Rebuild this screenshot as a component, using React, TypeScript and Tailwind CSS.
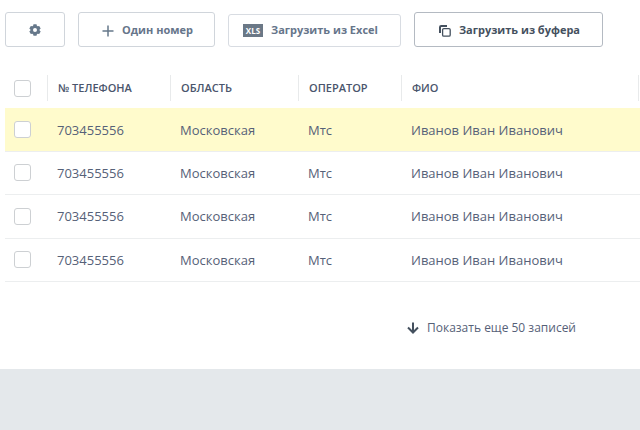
import type { ReactNode } from "react";

const columns = ["№ ТЕЛЕФОНА", "ОБЛАСТЬ", "ОПЕРАТОР", "ФИО"];

const records = [1, 2, 3, 4].map((id) => ({
  id,
  phone: "703455556",
  region: "Московская",
  operator: "Мтс",
  name: "Иванов Иван Иванович",
  highlighted: id === 1,
}));

function GearIcon() {
  return (
    <svg width="12" height="12" viewBox="0 0 12 12" fill="#66788a" fillRule="evenodd" aria-hidden="true">
      <path d="M4.500 0.300h3l.4 1.500.8.500 1.500-.4 1.500 2.600-1.100 1.100v.8l1.100 1.100-1.500 2.600-1.500-.4-.8.500-.4 1.500h-3l-.4-1.500-.8-.500-1.500.4L.3 7.500l1.100-1.100v-.8L.3 4.500 1.800 1.900l1.500.4.8-.500zM6 4a2 2 0 1 0 0 4 2 2 0 0 0 0-4z" />
    </svg>
  );
}

function PlusIcon() {
  return (
    <svg width="12" height="12" viewBox="0 0 12 12" stroke="#66788a" strokeWidth="1.5" aria-hidden="true">
      <path d="M6 0.500v11M0.500 6h11" />
    </svg>
  );
}

function CopyIcon() {
  return (
    <svg width="12" height="12" viewBox="0 0 12 12" fill="none" stroke="#44505e" strokeWidth="1.300" aria-hidden="true">
      <path d="M1 8V2.200Q1 1 2.200 1H8" strokeWidth="2" />
      <rect x="3.600" y="3.600" width="7.600" height="7.600" rx="1.200" />
    </svg>
  );
}

function ArrowIcon() {
  return (
    <svg width="12" height="12" viewBox="0 0 12 12" fill="none" stroke="#44505e" strokeWidth="2" aria-hidden="true">
      <path d="M6 0.500v10M1 5.500l5 5 5-5" />
    </svg>
  );
}

function Checkbox({ label }: { label: string }) {
  return (
    <input
      type="checkbox"
      aria-label={label}
      className="ml-[9px] block size-[17px] appearance-none rounded-[3px] border border-[#cdd0d3] bg-white checked:bg-[#66788a]"
    />
  );
}

function HeadCell({ children }: { children?: ReactNode }) {
  return (
    <th scope="col" className="p-0 text-left align-top font-semibold">
      <div className="flex h-[26px] items-center border-l border-[#e8eaeb] pl-2.5 whitespace-nowrap">{children}</div>
    </th>
  );
}

function Cell({ children, span }: { children: ReactNode; span?: number }) {
  return (
    <td className="p-0 pt-0.5 pl-2.5 whitespace-nowrap" colSpan={span}>
      {children}
    </td>
  );
}

export default function App() {
  return (
    <div className="min-h-screen overflow-x-hidden bg-[#e4e8eb] font-['Open_Sans','Noto_Sans',sans-serif] text-[#566178]">
      <main className="bg-white pt-3 pb-[31px] pl-[5px]">
        <div className="flex items-end gap-[13px] text-[11px] font-bold whitespace-nowrap text-[#66758a]">
          <button type="button" aria-label="Настройки" className="flex h-[35px] w-[60px] items-center justify-center rounded-[3px] border border-[#d0d5db]">
            <GearIcon />
          </button>
          <button type="button" className="flex h-[35px] w-[137px] items-center justify-center gap-2 rounded-[3px] border border-[#d0d5db] pt-0.5 pl-0.5">
            <PlusIcon />
            Один номер
          </button>
          <button type="button" className="flex h-[33px] w-[173px] items-center rounded-[3px] border border-[#d8dce2] pl-3.5">
            <span className="mr-2 flex h-[13px] w-5 items-center justify-center bg-[#6b7886] text-[8px] leading-none text-white">XLS</span>
            Загрузить из Excel
          </button>
          <button type="button" className="flex h-[35px] w-[189px] items-center justify-center gap-2 rounded-[3px] border border-[#b4bac2] pt-0.5 pl-0.5 text-[#44505e]">
            <CopyIcon />
            Загрузить из буфера
          </button>
        </div>

        <table className="mt-7 w-full table-fixed border-collapse">
          <colgroup>
            <col className="w-[42px]" />
            <col className="w-[123px]" />
            <col className="w-[128px]" />
            <col className="w-[103px]" />
            <col />
            <col className="w-[2px]" />
          </colgroup>
          <thead>
            <tr className="h-[33px] text-[11px] text-[#4a556c]">
              <th scope="col" className="p-0 align-top">
                <div className="flex h-[26px] items-center">
                  <Checkbox label="Выбрать все" />
                </div>
              </th>
              {columns.map((title) => (
                <HeadCell key={title}>{title}</HeadCell>
              ))}
              <td className="p-0 align-top">
                <div className="h-[26px] border-l border-[#e8eaeb]" />
              </td>
            </tr>
          </thead>
          <tbody className="text-[13px]">
            {records.map((r) => (
              <tr
                key={r.id}
                className={`h-[43px] border-b border-[#eceeef] nth-3:h-[44px] ${r.highlighted ? "bg-[#fffbcc]" : ""}`}
              >
                <td className="p-0">
                  <Checkbox label={`Выбрать запись ${r.id}`} />
                </td>
                <Cell>{r.phone}</Cell>
                <Cell>{r.region}</Cell>
                <Cell>{r.operator}</Cell>
                <Cell span={2}>{r.name}</Cell>
              </tr>
            ))}
          </tbody>
        </table>

        <div className="mt-9 flex justify-end pr-16">
          <button type="button" className="flex items-center gap-2 text-xs leading-5">
            <ArrowIcon />
            Показать еще 50 записей
          </button>
        </div>
      </main>
    </div>
  );
}
